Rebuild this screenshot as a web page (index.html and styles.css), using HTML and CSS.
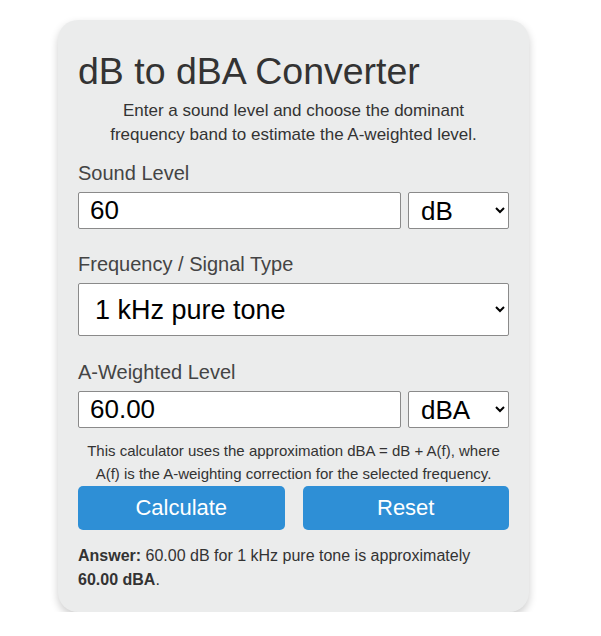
FILE: index.html
```
<!DOCTYPE html>
<html>
    <head>
        <title>dB to dBA Converter</title>
        <link rel="stylesheet" href="styles.css">
    </head>
    <body>
        <div class="card">
            <h1>dB to dBA Converter</h1>
            <p class="intro">Enter a sound level and choose the dominant frequency band to estimate the A-weighted level.</p>

            <label class="field-label" for="level">Sound Level</label>
            <div class="row">
                <input id="level" class="num" type="text" value="60">
                <select class="unit">
                    <option>dB</option>
                </select>
            </div>

            <label class="field-label" for="freq">Frequency / Signal Type</label>
            <select id="freq" class="freq">
                <option>1 kHz pure tone</option>
            </select>

            <label class="field-label" for="result">A-Weighted Level</label>
            <div class="row last">
                <input id="result" class="num" type="text" value="60.00">
                <select class="unit">
                    <option>dBA</option>
                </select>
            </div>

            <p class="note">This calculator uses the approximation dBA = dB + A(f), where A(f) is the A-weighting correction for the selected frequency.</p>

            <div class="buttons">
                <button class="btn">Calculate</button>
                <button class="btn">Reset</button>
            </div>

            <p class="answer"><b>Answer:</b> 60.00 dB for 1 kHz pure tone is approximately <b>60.00 dBA</b>.</p>
        </div>
    </body>
</html>
```

FILE: styles.css
```
body {
    margin: 0;
    background-color: white;
    font-family: "Liberation Sans", Arial, sans-serif;
    color: #333;
}
.card {
    box-sizing: border-box;
    width: 471px;
    margin: 20px 0 0 58px;
    padding: 20px 20px 20px;
    background-color: #ebecec;
    border-radius: 20px;
    box-shadow: 0 4px 8px rgba(0, 0, 0, 0.2);
}
h1 {
    margin: 9px 0 5px;
    font-size: 37.5px;
    font-weight: normal;
    line-height: 1.2;
    color: #333;
}
.intro {
    max-width: 400px;
    margin: 0 auto 14px;
    font-size: 17px;
    line-height: 24px;
    text-align: center;
}
.field-label {
    display: block;
    margin-bottom: 7px;
    font-size: 20px;
    line-height: 24px;
    color: #444;
}
.row {
    display: flex;
    gap: 7px;
    margin-bottom: 23px;
}
.row.last {
    margin-bottom: 0;
}
.num {
    flex: 1;
    min-width: 0;
    box-sizing: border-box;
    height: 37px;
    padding: 0 11px;
    border: 1px solid #8a8a8a;
    border-radius: 2px;
    background: white;
    font-family: inherit;
    font-size: 26px;
    color: black;
}
.unit {
    box-sizing: border-box;
    width: 101px;
    height: 37px;
    padding: 0 8px;
    border: 1px solid #8a8a8a;
    border-radius: 2px;
    background: white;
    font-family: inherit;
    font-size: 26px;
    color: black;
}
.freq {
    display: block;
    box-sizing: border-box;
    width: 100%;
    height: 53px;
    margin-bottom: 24px;
    padding: 0 12px;
    border: 1px solid #8a8a8a;
    border-radius: 2px;
    background: white;
    font-family: inherit;
    font-size: 27px;
    color: black;
}
.note {
    margin: 11px 0 0;
    font-size: 15px;
    line-height: 23.3px;
    text-align: center;
}
.buttons {
    display: grid;
    grid-template-columns: 1fr 1fr;
    gap: 18px;
}
.btn {
    height: 44px;
    border: none;
    border-radius: 5px;
    background-color: #2e8fd6;
    color: white;
    font-family: inherit;
    font-size: 22px;
}
.answer {
    margin: 14px 0 0;
    font-size: 16px;
    line-height: 24.3px;
}
```
